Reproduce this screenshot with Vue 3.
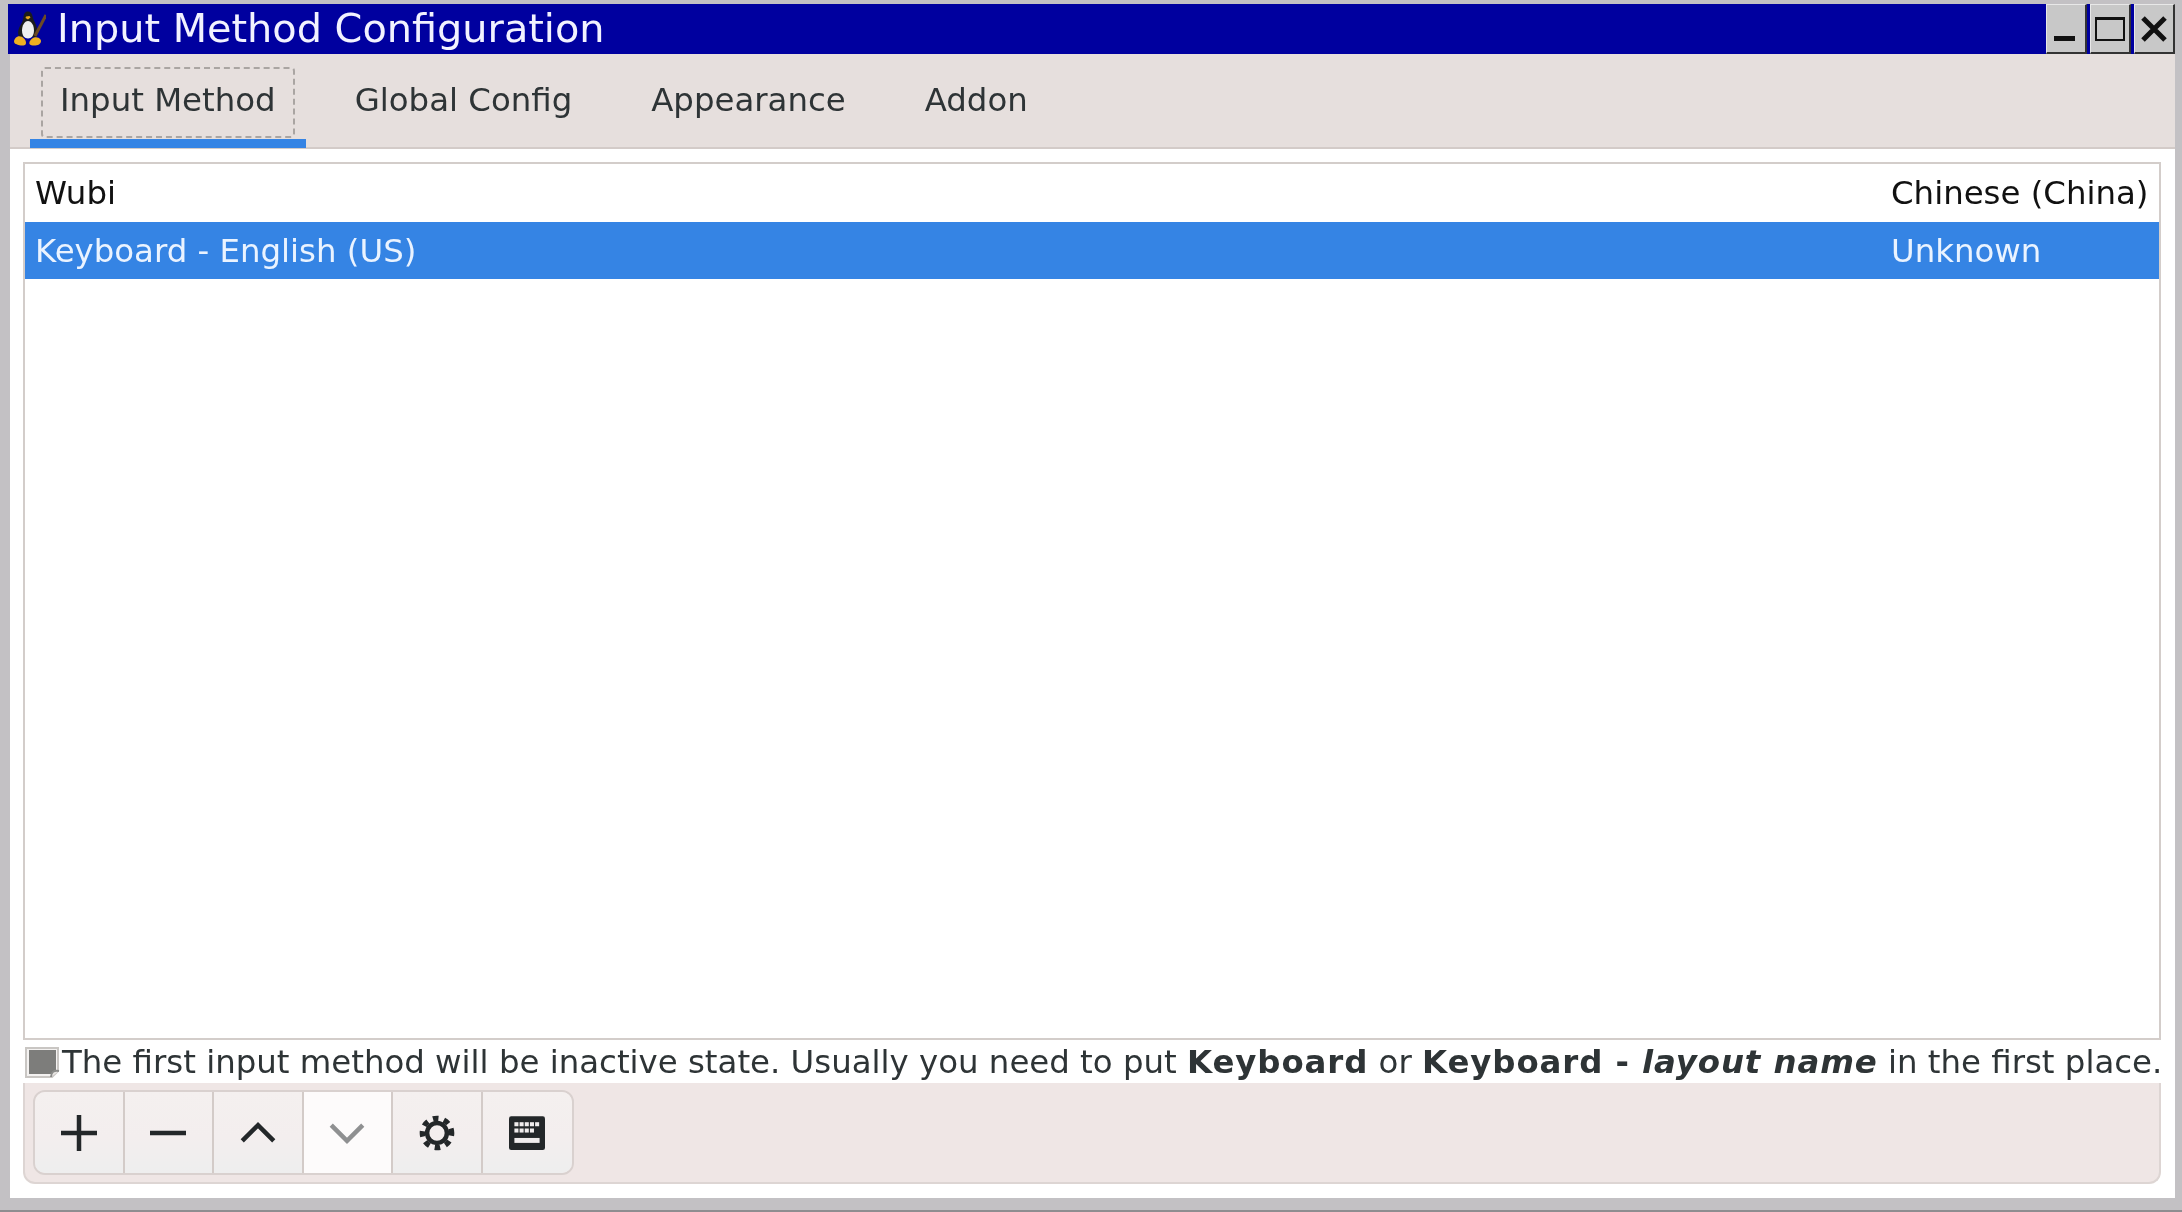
<script setup>
const tabs = ['Input Method', 'Global Config', 'Appearance', 'Addon']
const methods = [
  { name: 'Wubi', lang: 'Chinese (China)', selected: false },
  { name: 'Keyboard - English (US)', lang: 'Unknown', selected: true }
]
const keyRows = [
  { y: 3.2, xs: [2.4, 4.7, 7, 9.3, 11.6] },
  { y: 6, xs: [2.4, 4.7, 7, 9.3] }
]
</script>

<template>
  <div class="frame">
    <header class="titlebar">
      <svg class="penguin" viewBox="0 0 32 36">
        <path d="M12 1c3-1.500 6 .5 6.500 4 .3 3 2 5 3.500 9 1.500 4 2 9 .5 12H5c-1.500-3-1-7 1-11 2-3.500 3-5 3.500-9 .3-2.500 1-4 2.500-5z" fill="#1c1c1c" />
        <path d="M14 10c3.500 0 6 4.500 6 9.500 0 5-2.500 8-6 8s-6-3-6-8c0-5 2.500-9.500 6-9.500z" fill="#efefef" />
        <path d="M12 5.500l3.500-.5 1 1.500-2.500 2-2.500-1.500z" fill="#e9a81f" />
        <path d="M1.500 27c2.500-2.500 6-2 8.500.5 2 2 2.500 4.500 1.500 6-1.500 2-6 1-9.500-.5-2.500-1-2.500-3.500-.5-6z" fill="#f0b020" />
        <path d="M25 33.500c-3 1.500-8 1.500-9.500-.5-.8-2 1.500-5.500 4.500-6.500 2.500-.8 5 0 6.500 2 1 1.500 .5 3.500-1.500 5z" fill="#f0b020" />
        <path d="M32 4L21 25" stroke="#6c4a24" stroke-width="3" fill="none" />
      </svg>
      <span class="title">Input Method Configuration</span>
      <div class="wm-buttons">
        <div class="wm-btn"><span class="wm-min"></span></div>
        <div class="wm-btn"><span class="wm-max"></span></div>
        <div class="wm-btn wm-last">
          <svg viewBox="0 0 28 28" class="wm-x"><path d="M3 3l22 22M25 3L3 25" stroke="#111" stroke-width="5" /></svg>
        </div>
      </div>
    </header>

    <nav class="tabs">
      <div v-for="(tab, i) in tabs" :key="tab" class="tab" :class="{ active: i === 0 }">
        <span v-if="i === 0" class="focus-ring"></span>
        {{ tab }}
      </div>
    </nav>

    <main class="content">
      <div class="list">
        <div v-for="m in methods" :key="m.name" class="row" :class="{ selected: m.selected }">
          <span>{{ m.name }}</span>
          <span>{{ m.lang }}</span>
        </div>
      </div>

      <div class="hint">
        <svg class="hint-icon" viewBox="0 0 37 32">
          <path d="M2 2h32v23l-6 6H2z" fill="#f4f2f1" stroke="#c9c6c3" stroke-width="2" />
          <path d="M5 4h27v20l-5 4H5z" fill="#7d7d7b" />
          <path d="M27 31c0-5 3-7 8-6" fill="#e8e6e4" stroke="#8b8b89" stroke-width="2" />
        </svg>
        <span>The first input method will be inactive state. Usually you need to put <b>Keyboard</b> or <b>Keyboard - <i>layout name</i></b> in the first place.</span>
      </div>

      <div class="toolbar">
        <div class="btn-group">
          <button class="tool">
            <svg class="icon" viewBox="0 0 16 16"><path d="M7 0h2v7h7v2H9v7H7V9H0V7h7z" /></svg>
          </button>
          <button class="tool">
            <svg class="icon" viewBox="0 0 16 16"><rect y="7" width="16" height="2" /></svg>
          </button>
          <button class="tool">
            <svg class="icon" viewBox="0 0 16 16"><path d="M1 11.500l7-7 7 7" class="chev" /></svg>
          </button>
          <button class="tool disabled">
            <svg class="icon dim" viewBox="0 0 16 16"><path d="M1 4.500l7 7 7-7" class="chev" /></svg>
          </button>
          <button class="tool">
            <svg class="icon" viewBox="0 0 16 16">
              <circle cx="8" cy="8" r="4.400" class="gear-ring" />
              <circle cx="8" cy="8" r="6.500" class="gear-teeth" pathLength="32" />
            </svg>
          </button>
          <button class="tool">
            <svg class="icon" viewBox="0 0 16 16">
              <rect y=".5" width="16" height="15" rx="1" />
              <template v-for="r in keyRows" :key="r.y">
                <rect v-for="x in r.xs" :key="x" :x="x" :y="r.y" width="1.800" height="1.800" fill="#f0eded" />
              </template>
              <rect x="2.400" y="10.200" width="11.200" height="2.200" fill="#f0eded" />
            </svg>
          </button>
        </div>
      </div>
    </main>
  </div>
</template>

<style>
html, body {
  margin: 0;
  background: #c3c1c4;
}
</style>

<style scoped>
.frame {
  width: 2182px;
  height: 1212px;
  box-sizing: border-box;
  padding: 4px 7px 12px 8px;
  display: flex;
  flex-direction: column;
  background: #c3c1c4;
  border-bottom: 2px solid #8e8d90;
  font-family: "DejaVu Sans", sans-serif;
  color: #2e3436;
  overflow: hidden;
  filter: blur(0.6px);
}

.titlebar {
  height: 50px;
  flex: none;
  display: flex;
  align-items: center;
  background: #00009f;
  color: #f2f2ff;
  font-size: 39.800px;
  line-height: 1;
  padding-left: 6px;
}

.penguin {
  width: 32px;
  height: 36px;
  margin-right: 11px;
  flex: none;
}

.wm-buttons {
  margin-left: auto;
  display: flex;
  gap: 3px;
  align-self: stretch;
}

.wm-btn {
  width: 41px;
  box-sizing: border-box;
  background: #c8c8c8;
  border-right: 2px solid #333;
  border-bottom: 2px solid #333;
  border-top: 1px solid #e8e8e8;
  border-left: 1px solid #e8e8e8;
  position: relative;
  display: flex;
  align-items: center;
  justify-content: center;
}

.wm-min {
  position: absolute;
  left: 7px;
  right: 10px;
  bottom: 11px;
  height: 5px;
  background: #111;
}

.wm-max {
  width: 30px;
  height: 24px;
  border: 2px solid #111;
  border-top-width: 3px;
  box-sizing: border-box;
}

.wm-x {
  width: 28px;
  height: 28px;
}

.tabs {
  height: 95px;
  flex: none;
  box-sizing: border-box;
  display: flex;
  gap: 19px;
  margin-left: 2px;
  padding-left: 20px;
  background: #e6dfdd;
  border-bottom: 2px solid #d3cbc8;
  font-size: 32.400px;
}

.tab {
  position: relative;
  display: flex;
  align-items: center;
  padding: 0 30px 2px;
  margin-bottom: -1px;
  white-space: nowrap;
}

.tab.active {
  border-bottom: 9px solid #3584e4;
  padding-bottom: 0;
  padding-top: 6px;
}

.focus-ring {
  position: absolute;
  left: 11px;
  right: 11px;
  top: 13px;
  bottom: 1px;
  border: 2px dashed #aaa5a2;
  border-radius: 4px;
}

.content {
  flex: 1;
  min-height: 0;
  display: flex;
  flex-direction: column;
  margin-left: 2px;
  background: #fff;
  padding: 13px 14px 14px 13px;
}

.list {
  flex: 1;
  min-height: 0;
  border: 2px solid #d3cdca;
  background: #fff;
}

.row {
  display: grid;
  grid-template-columns: 1fr 258px;
  column-gap: 12px;
  align-items: center;
  height: 57px;
  padding: 0 10px 0 10px;
  font-size: 32.400px;
  color: #111;
  white-space: nowrap;
}

.row:first-child {
  height: 58px;
}

.row.selected {
  background: #3584e4;
  color: #eaf3ff;
}

.hint {
  height: 43px;
  flex: none;
  display: flex;
  align-items: center;
  font-size: 32.400px;
  white-space: nowrap;
}

.hint b {
  letter-spacing: 0.9px;
}

.hint-icon {
  width: 37px;
  height: 32px;
  margin-left: 1px;
  margin-right: 1px;
  flex: none;
}

.toolbar {
  height: 101px;
  flex: none;
  box-sizing: border-box;
  display: flex;
  align-items: center;
  padding-left: 8px;
  background: #efe6e5;
  border: 2px solid #ddd5d3;
  border-top: none;
  border-radius: 0 0 12px 12px;
}

.btn-group {
  display: flex;
  height: 81px;
  border: 2px solid #d9d1cf;
  border-radius: 12px;
  overflow: hidden;
}

.tool {
  width: 89.500px;
  padding: 0;
  border: none;
  border-right: 2px solid #d3cbc8;
  background: linear-gradient(#f4f0ef, #f3eeee 55%, #eeeeee);
  display: flex;
  align-items: center;
  justify-content: center;
}

.tool:last-child {
  border-right: none;
}

.tool.disabled {
  background: #fdfbfb;
}

.icon {
  width: 36px;
  height: 36px;
  fill: #232729;
}

.icon.dim {
  opacity: 0.5;
}

.chev {
  fill: none;
  stroke: #232729;
  stroke-width: 2;
}

.gear-ring {
  fill: none;
  stroke: #232729;
  stroke-width: 2;
}

.gear-teeth {
  fill: none;
  stroke: #232729;
  stroke-width: 2.400;
  stroke-dasharray: 2 2;
  stroke-dashoffset: 1;
}
</style>
